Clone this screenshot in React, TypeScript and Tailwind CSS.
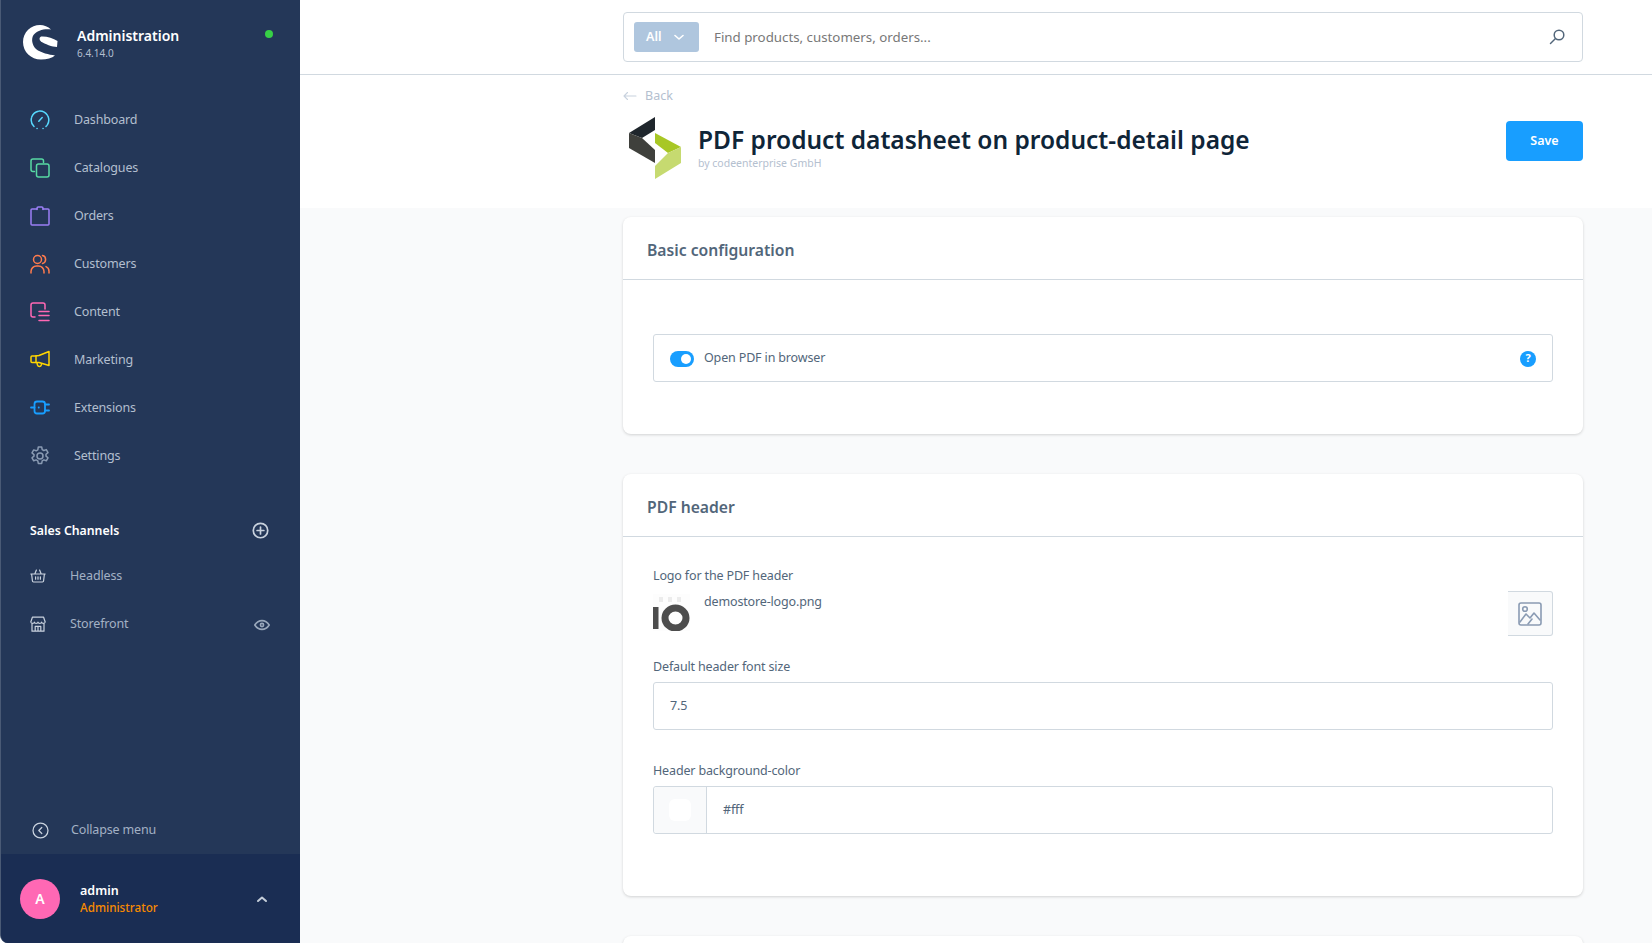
import React from "react";

const font = { fontFamily: '"Noto Sans", sans-serif' };

const Ic = ({ children, size = 20, className = "" }: { children: React.ReactNode; size?: number; className?: string }) => (
  <svg width={size} height={size} viewBox="0 0 20 20" fill="none" stroke="currentColor" strokeWidth="1.5" strokeLinecap="round" strokeLinejoin="round" className={className}>
    {children}
  </svg>
);

const nav = [
  { label: "Dashboard", color: "text-[#57d9ff]", icon: <><path d="M4 16.5A9 9 0 0 1 10 1a9 9 0 0 1 6 15.5" strokeDasharray="9 1.2" /><path d="M8.8 11.2 12.2 7.6" /><path d="M7 18.5h.1M13 18.5h.1" /></> },
  { label: "Catalogues", color: "text-[#57d9a3]", icon: <><path d="M4.5 13.5H3a2 2 0 0 1-2-2V3a2 2 0 0 1 2-2h8.5a2 2 0 0 1 2 2v1.5" /><rect x="6.5" y="6" width="12.5" height="13" rx="2" /></> },
  { label: "Orders", color: "text-[#9a7ff5]", icon: <><path d="M7 3H2a1 1 0 0 0-1 1v14a1 1 0 0 0 1 1h16a1 1 0 0 0 1-1V4a1 1 0 0 0-1-1h-5" /><path d="M7 3.5V2.2A1.2 1.2 0 0 1 8.2 1h3.6A1.2 1.2 0 0 1 13 2.2v1.3" /></> },
  { label: "Customers", color: "text-[#ff7b4d]", icon: <><circle cx="7.5" cy="5.5" r="4" /><path d="M1 19v-1.5A5.5 5.5 0 0 1 6.5 12h2a5.5 5.5 0 0 1 5.5 5.5V19" /><path d="M12.5 1.6a4 4 0 0 1 0 7.8M16 12.6a5 5 0 0 1 3 4.6V19" /></> },
  { label: "Content", color: "text-[#ff68b4]", icon: <><path d="M5 15H3a2 2 0 0 1-2-2V3a2 2 0 0 1 2-2h10a2 2 0 0 1 2 2v4" /><path d="M9 9.5h10M9 13.5h10M9 18.5h10" /></> },
  { label: "Marketing", color: "text-[#ffd500]", icon: <><path d="M1 7a1 1 0 0 1 1-1h3l4-.5L19 1.5v14L9 12.5H2a1 1 0 0 1-1-1Z" /><path d="M6 6v6.5" /><path d="M7 12.8 7.5 15a2 2 0 0 0 3.8 0l.2-1" /></> },
  { label: "Extensions", color: "text-[#189eff]", icon: <><rect x="4.5" y="3.500" width="10.500" height="12" rx="2.500" strokeWidth="1.800" /><path d="M1 9.500h3.500M15 6.500h4M15 12.500h4" strokeWidth="1.800" /><path d="M8.700 9.500h.1" strokeWidth="1.800" /></> },
  { label: "Settings", color: "text-[#8a9bb3]", icon: <><circle cx="10" cy="10" r="3" /><path d="M8.3 1h3.4l.5 2.6 1.6.9 2.5-.9 1.7 3-2 1.7v1.8l2 1.7-1.7 3-2.5-.9-1.6.9-.5 2.6H8.3l-.5-2.6-1.6-.9-2.5.9-1.7-3 2-1.7V8.6l-2-1.7 1.7-3 2.5.9 1.6-.9Z" /></> },
];

const NavItem = ({ label, color, icon }: { label: string; color: string; icon: React.ReactNode }) => (
  <div className="flex h-12 items-center pl-[29px]">
    <Ic className={color}>{icon}</Ic>
    <span className="ml-[24px] text-[12.5px] tracking-[-0.15px] text-[#b3bfcf]">{label}</span>
  </div>
);

const Field = ({ children, className = "" }: { children: React.ReactNode; className?: string }) => (
  <div className={`flex h-12 items-center rounded-[3px] border border-[#d1d9e0] bg-white pt-[1px] text-[12.5px] tracking-[-0.15px] text-[#52667a] ${className}`}>{children}</div>
);

const Label = ({ children }: { children: React.ReactNode }) => (
  <div className="text-[12.5px] leading-[18px] tracking-[-0.15px] text-[#52667a]">{children}</div>
);

const Card = ({ title, children, className = "" }: { title: string; children: React.ReactNode; className?: string }) => (
  <section className={`rounded-[8px] bg-white shadow-[0_1px_3px_rgba(0,0,0,0.16)] ${className}`}>
    <h2 className="flex h-[63px] items-center border-b border-[#d1d9e0] pl-6 pt-[5px] text-[15.7px] font-semibold text-[#52667a]">{title}</h2>
    {children}
  </section>
);

export default function App() {
  return (
    <div style={font} className="flex h-[943px] w-[1652px] overflow-hidden bg-white">
      <aside className="flex h-full w-[300px] shrink-0 flex-col overflow-hidden rounded-bl-[8px] border-l border-[#4a5a75] bg-[#243758]">
        <div className="flex h-[80px] items-start pl-[22px] pt-[25px]">
          <svg width="35" height="35" viewBox="0 0 35 35" className="shrink-0">
            <path fill="#fff" d="M17 0C21 0 25 1.500 28 4.500C22 3.500 14 5 10.500 10C8 14 9 20 13 24C18 28 26 29.500 32 30.500C29 33 24 34.500 18 34.500C8 34.500 0 27 0 17C0 7 8 0 17 0Z" />
            <path fill="#fff" d="M18 11.500C23 11 30 13 34.500 16L34 22C29 22 22 19 18 16.500C16 15 16 12.500 18 11.500Z" />
          </svg>
          <div className="ml-[19px] mt-[1px]">
            <div className="text-[14px] font-semibold leading-[20px] text-white">Administration</div>
            <div className="text-[10px] leading-[14px] text-[#b3bfcf]">6.4.14.0</div>
          </div>
          <span className="ml-auto mr-[27px] mt-[5px] h-2 w-2 rounded-full bg-[#37d046]" />
        </div>
        <nav className="mt-[16px]">
          {nav.map((n) => <NavItem key={n.label} {...n} />)}
        </nav>
        <div className="mt-[39px] flex h-[24px] items-center justify-between pl-[29px] pr-[31px]">
          <span className="text-[12.3px] font-semibold text-white">Sales Channels</span>
          <Ic size={17} className="-mt-[1px] text-[#c9d2de]"><circle cx="10" cy="10" r="8.500" strokeWidth="2" /><path d="M10 6v8M6 10h8" strokeWidth="2" /></Ic>
        </div>
        <div className="mt-[9px] flex h-12 items-center pl-[29px]">
          <Ic size={16} className="text-[#c9d2de]"><path d="M1 7.500h18M2 7.500l1 8.500a1.500 1.500 0 0 0 1.500 1.500h11A1.500 1.500 0 0 0 17 16l1-8.500M6 7.500l2-5M14 7.500l-2-5M7 11v3M10 11v3M13 11v3" /></Ic>
          <span className="ml-[24px] text-[12.5px] tracking-[-0.15px] text-[#a3b1c4]">Headless</span>
        </div>
        <div className="flex h-12 items-center pl-[29px] pr-[30px]">
          <Ic size={16} className="text-[#c9d2de]"><path d="M3 1.500h14l2 6a2.300 2.300 0 0 1-4.500 0 2.300 2.300 0 0 1-4.500 0 2.300 2.300 0 0 1-4.500 0 2.300 2.300 0 0 1-4.500 0Z" /><path d="M2.500 10v9h15v-9M6.500 19v-6h7v6M10 13v6" /></Ic>
          <span className="ml-[24px] text-[12.5px] tracking-[-0.15px] text-[#a3b1c4]">Storefront</span>
          <Ic size={16} className="ml-auto mt-[2px] text-[#9aa8bb]"><path d="M1 10s3.500-5.500 9-5.500S19 10 19 10s-3.500 5.500-9 5.500S1 10 1 10Z" strokeWidth="2" /><circle cx="10" cy="10" r="2" strokeWidth="2" /></Ic>
        </div>
        <div className="mt-auto flex h-[48px] items-center pl-[31px] pt-[1px]">
          <Ic size={17} className="text-[#c9d2de]"><circle cx="10" cy="10" r="8.800" /><path d="m11.500 6.500-3.500 3.500 3.500 3.500" /></Ic>
          <span className="ml-[22px] text-[12.5px] tracking-[-0.15px] text-[#a3b1c4]">Collapse menu</span>
        </div>
        <div className="flex h-[89px] shrink-0 items-center bg-[#1a2d53] pl-[19px] pr-[32px]">
          <div className="flex h-10 w-10 items-center justify-center rounded-full bg-[#ff68b4] text-[14px] font-semibold text-white">A</div>
          <div className="ml-[20px]">
            <div className="text-[12.5px] font-semibold leading-[17px] text-white">admin</div>
            <div className="text-[11.7px] font-medium leading-[17px] text-[#f88a00]">Administrator</div>
          </div>
          <svg width="12" height="8" viewBox="0 0 12 8" fill="none" stroke="#c4cdd9" strokeWidth="2" strokeLinecap="round" strokeLinejoin="round" className="ml-auto"><path d="m2 6 4-3.500L10 6" /></svg>
        </div>
      </aside>

      <main className="flex min-w-0 flex-1 flex-col bg-[#f9fafb]">
        <header className="bg-white">
          <div className="flex h-[75px] border-b border-[#d1d9e0] pl-[323px] pt-3">
            <div className="flex h-[50px] w-[960px] items-center rounded-[4px] border border-[#d1d9e0] pl-[10px] pr-[17px]">
              <div className="flex h-[30px] w-[65px] items-center justify-between rounded-[3px] bg-[#afc6de] pb-[0px] pl-[12px] pr-[15px] pt-[1px] text-[12.5px] font-semibold text-white">
                All
                <svg width="10" height="7" viewBox="0 0 10 7" fill="none" stroke="#fff" strokeWidth="1.600" strokeLinecap="round" strokeLinejoin="round"><path d="m1 1.500 4 3.500 4-3.500" /></svg>
              </div>
              <span className="ml-[15px] mt-[1px] text-[13.3px] text-[#787878]">Find products, customers, orders...</span>
              <svg width="16" height="16" viewBox="0 0 16 16" fill="none" stroke="#52667a" strokeWidth="1.500" strokeLinecap="round" className="ml-auto"><circle cx="10" cy="6" r="4.800" /><path d="M6.500 9.500 1.500 14.500" /></svg>
            </div>
          </div>
          <div className="ml-[323px] h-[133px] w-[960px] pt-[12px]">
            <div className="flex h-[18px] items-center text-[12.5px] text-[#b4c0cf]">
              <svg width="14" height="10" viewBox="0 0 14 10" fill="none" stroke="#c8d2de" strokeWidth="1.100" strokeLinecap="round" strokeLinejoin="round"><path d="M13 5H1M4.500 1.500 1 5l3.500 3.500" /></svg>
              <span className="ml-[8px]">Back</span>
            </div>
            <div className="mt-[11px] flex items-start">
              <svg width="55" height="65" viewBox="0 0 55 65" className="ml-[5px] shrink-0">
                <path fill="#1f262c" d="M27 1v13l-13 8L1 17Z" />
                <path fill="#3f403c" d="M1 17l13 5 13 12v13L1 32Z" />
                <path fill="#a8c725" d="M27 17l26 14-13 6-13-10Z" />
                <path fill="#c6da70" d="M53 31v16L27 63V50l13-13Z" />
              </svg>
              <div className="ml-[15px] mt-[7px]">
                <h1 className="text-[24.5px] font-semibold leading-[34px] text-[#0f2538]">PDF product datasheet on product-detail page</h1>
                <div className="text-[10.5px] leading-[12px] text-[#b4c0cf]">by codeenterprise GmbH</div>
              </div>
              <button className="ml-auto mt-[5px] flex h-10 w-[77px] items-center justify-center rounded-[4px] bg-[#189eff] pt-[1px] text-[12.5px] font-semibold text-white">Save</button>
            </div>
          </div>
        </header>

        <div className="ml-[323px] mt-[9px] flex w-[960px] flex-col gap-10">
          <Card title="Basic configuration" className="h-[217px] shrink-0">
            <div className="px-[30px] pt-[54px]">
              <Field className="pl-[16px] pr-[16px]">
                <span className="flex h-4 w-6 items-center justify-end rounded-full bg-[#189eff] pr-[3px]"><span className="h-[10px] w-[10px] rounded-full bg-white" /></span>
                <span className="ml-[10px]">Open PDF in browser</span>
                <span className="ml-auto flex h-4 w-4 items-center justify-center rounded-full bg-[#189eff] text-[11px] font-bold text-white">?</span>
              </Field>
            </div>
          </Card>

          <Card title="PDF header" className="h-[422px] shrink-0">
            <div className="px-[30px] pt-[30px]">
              <Label>Logo for the PDF header</Label>
              <div className="mt-[6px] flex h-[46px] items-start">
                <svg width="37" height="37" viewBox="0 0 37 37" className="mt-[3px] shrink-0">
                  <rect width="37" height="37" fill="#fdfdfd" />
                  <path fill="#ececec" d="M6 3h4v5H6ZM15 3h4v5h-4ZM24 3h4v5h-4Z" />
                  <rect x="0" y="13" width="5.500" height="22" fill="#4d4d4d" />
                  <ellipse cx="22.500" cy="24" rx="10.500" ry="10" fill="none" stroke="#4d4d4d" strokeWidth="7" />
                </svg>
                <span className="mt-[2px] ml-[14px] text-[12.5px] leading-[18px] tracking-[-0.15px] text-[#52667a]">demostore-logo.png</span>
                <div className="ml-auto flex h-[45px] w-[45px] items-center justify-center rounded-r-[3px] border border-l-0 border-[#d1d9e0] bg-[#f9fafb]">
                  <svg width="24" height="24" viewBox="0 0 24 24" fill="none" stroke="#8a9bb3" strokeWidth="1.600" strokeLinecap="round" strokeLinejoin="round"><rect x="1" y="1" width="22" height="22" rx="2" /><circle cx="7" cy="7" r="2.300" /><path d="m2 20 6-8 4 4 4-5 6 7M10 22l4-5" /></svg>
                </div>
              </div>
              <div className="mt-[21px]"><Label>Default header font size</Label></div>
              <Field className="mt-[6px] pl-[16px]">7.5</Field>
              <div className="mt-[32px]"><Label>Header background-color</Label></div>
              <Field className="mt-[6px]">
                <div className="-mt-[1px] flex h-[46px] w-[53px] items-center justify-center rounded-l-[3px] border-r border-[#d1d9e0] bg-[#f9fafb]">
                  <span className="h-[22px] w-[22px] rounded-[6px] bg-white" />
                </div>
                <span className="ml-[16px]">#fff</span>
              </Field>
            </div>
          </Card>

          <div className="h-20 shrink-0 rounded-[8px] bg-white shadow-[0_1px_3px_rgba(0,0,0,0.16)]" />
        </div>
      </main>
    </div>
  );
}
